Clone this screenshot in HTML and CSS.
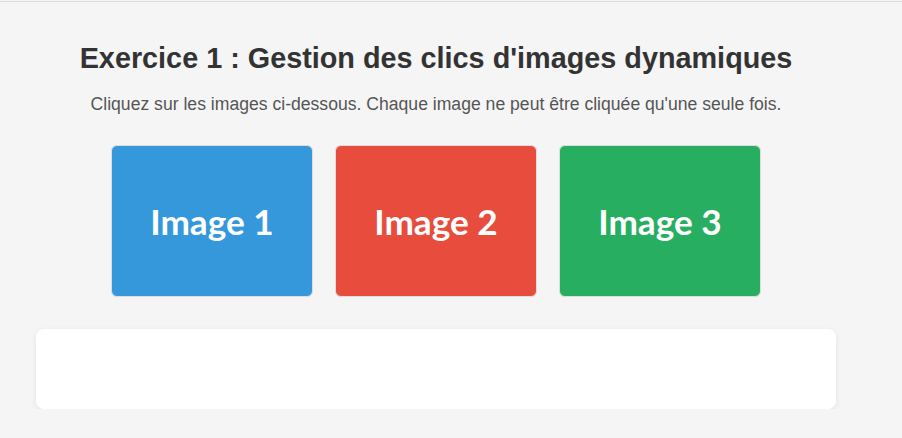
FILE: index.html
```html
<!DOCTYPE html>
<html lang="fr">
<head>
    <meta charset="UTF-8">
    <meta name="viewport" content="width=device-width, initial-scale=1.0">
    <title>Exercice 1</title>
    <link rel="stylesheet" href="styles.css">
</head>
<body>
    <div class="container">
        <h1>Exercice 1 : Gestion des clics d'images dynamiques</h1>
        <p class="intro">Cliquez sur les images ci-dessous. Chaque image ne peut être cliquée qu'une seule fois.</p>

        <div class="gallery">
            <div class="image-box blue">Image 1</div>
            <div class="image-box red">Image 2</div>
            <div class="image-box green">Image 3</div>
        </div>

        <div class="result" id="result"></div>
    </div>
</body>
</html>
```

FILE: styles.css
```css
body {
    font-family: 'Liberation Sans', Arial, sans-serif;
    margin: 0;
    padding: 0;
    background: #f5f5f5;
    color: #333;
    border-top: 1px solid #d8dcdc;
    margin-top: 1px;
}

.container {
    width: 800px;
    margin: 0 0 0 36px;
    padding-top: 28px;
}

h1 {
    font-size: 28.8px;
    color: #333;
    text-align: center;
    margin: 12px 0 19px 0;
}

.intro {
    font-size: 17.6px;
    color: #555;
    text-align: center;
    margin: 0 0 30px 0;
}

.gallery {
    display: flex;
    justify-content: center;
    gap: 22px;
}

.image-box {
    width: 200px;
    height: 150px;
    border: 1px solid #ddd;
    border-radius: 6px;
    display: flex;
    justify-content: center;
    align-items: center;
    font-family: 'Lato', sans-serif;
    font-weight: bold;
    font-size: 35.2px;
    color: #fff;
    cursor: pointer;
}

.blue { background: #3498db; }
.red { background: #e74c3c; }
.green { background: #27ae60; }

.result {
    margin-top: 32px;
    height: 80px;
    background: #fff;
    border-radius: 8px;
    box-shadow: 0 2px 6px rgba(0, 0, 0, 0.08);
}
```
